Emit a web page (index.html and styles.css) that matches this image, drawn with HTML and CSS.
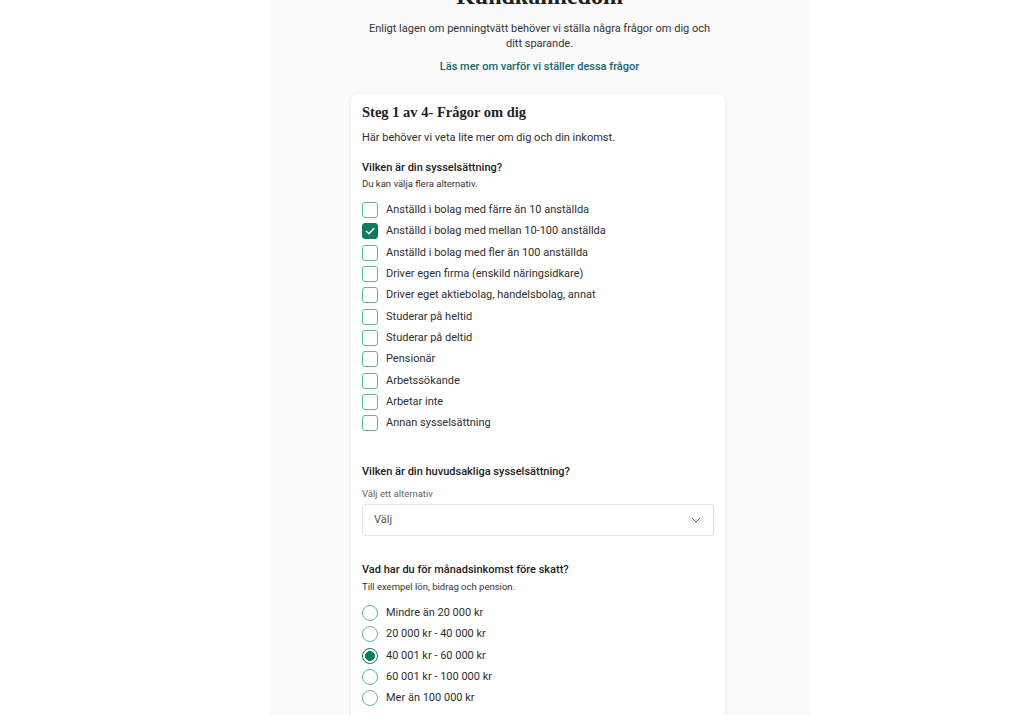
FILE: index.html
```html
<!DOCTYPE html>
<html lang="sv">
<head>
<meta charset="utf-8">
<title>Kundkännedom</title>
<link rel="stylesheet" href="styles.css">
</head>
<body>
<main class="page">
  <h1 class="title">Kundkännedom</h1>
  <p class="intro">Enligt lagen om penningtvätt behöver vi ställa några frågor om dig och ditt sparande.</p>
  <a class="more" href="#">Läs mer om varför vi ställer dessa frågor</a>

  <section class="card">
    <h2 class="step">Steg 1 av 4- Frågor om dig</h2>
    <p class="lead">Här behöver vi veta lite mer om dig och din inkomst.</p>

    <h3 class="q q-first">Vilken är din sysselsättning?</h3>
    <p class="hint">Du kan välja flera alternativ.</p>
    <div class="options">
      <label class="opt"><span class="box"></span>Anställd i bolag med färre än 10 anställda</label>
      <label class="opt"><span class="box checked"><svg viewBox="0 0 16 16" width="16" height="16"><path d="M4.3 8.2 L6.9 10.7 L11.8 5.6" fill="none" stroke="#fff" stroke-width="1.5" stroke-linecap="round" stroke-linejoin="round"/></svg></span>Anställd i bolag med mellan 10-100 anställda</label>
      <label class="opt"><span class="box"></span>Anställd i bolag med fler än 100 anställda</label>
      <label class="opt"><span class="box"></span>Driver egen firma (enskild näringsidkare)</label>
      <label class="opt"><span class="box"></span>Driver eget aktiebolag, handelsbolag, annat</label>
      <label class="opt"><span class="box"></span>Studerar på heltid</label>
      <label class="opt"><span class="box"></span>Studerar på deltid</label>
      <label class="opt"><span class="box"></span>Pensionär</label>
      <label class="opt"><span class="box"></span>Arbetssökande</label>
      <label class="opt"><span class="box"></span>Arbetar inte</label>
      <label class="opt"><span class="box"></span>Annan sysselsättning</label>
    </div>

    <h3 class="q q-main">Vilken är din huvudsakliga sysselsättning?</h3>
    <p class="field-label">Välj ett alternativ</p>
    <div class="select">
      <span>Välj</span>
      <svg class="chev" viewBox="0 0 10 6" width="10" height="6"><path d="M1 1 L5 5 L9 1" fill="none" stroke="#666" stroke-width="1"/></svg>
    </div>

    <h3 class="q q-income">Vad har du för månadsinkomst före skatt?</h3>
    <p class="hint">Till exempel lön, bidrag och pension.</p>
    <div class="options options-radio">
      <label class="opt"><span class="radio"></span>Mindre än 20 000 kr</label>
      <label class="opt"><span class="radio"></span>20 000 kr - 40 000 kr</label>
      <label class="opt"><span class="radio checked"></span>40 001 kr - 60 000 kr</label>
      <label class="opt"><span class="radio"></span>60 001 kr - 100 000 kr</label>
      <label class="opt"><span class="radio"></span>Mer än 100 000 kr</label>
    </div>
  </section>
</main>
</body>
</html>
```

FILE: styles.css
```css
html, body {
  margin: 0;
  padding: 0;
  background: #ffffff;
  overflow: hidden;
}

body {
  font-family: Roboto, "Liberation Sans", sans-serif;
  color: #2e2e2e;
}

.page {
  margin-left: 269px;
  width: 541px;
  min-height: 715px;
  background: #fafafa;
  display: flex;
  flex-direction: column;
  align-items: center;
}

.title {
  margin: -18px 0 0 0;
  font-family: "Liberation Serif", "DejaVu Serif", serif;
  font-weight: bold;
  font-size: 24px;
  line-height: 28px;
  color: #1e1e1e;
  text-align: center;
}

.intro {
  margin: 10.5px 0 0 0;
  width: 350px;
  font-size: 11px;
  line-height: 15px;
  text-align: center;
  color: #333;
}

.more {
  margin-top: 8px;
  font-size: 11px;
  line-height: 15px;
  font-weight: 500;
  color: #17666e;
  text-decoration: none;
}

.card {
  margin-top: 20.5px;
  align-self: flex-start;
  margin-left: 82px;
  width: 374px;
  box-sizing: border-box;
  padding: 9px 11px 30px 11px;
  background: #ffffff;
  border-radius: 7px;
  box-shadow: 0 1px 5px rgba(0, 0, 0, 0.07);
  display: flex;
  flex-direction: column;
}

.step {
  margin: 0;
  font-family: "Liberation Serif", "DejaVu Serif", serif;
  font-weight: bold;
  font-size: 14.5px;
  line-height: 18px;
  color: #1e1e1e;
}

.lead {
  margin: 8.5px 0 0 0;
  font-size: 11px;
  line-height: 15px;
  color: #2e2e2e;
}

.q {
  margin: 0;
  font-size: 11px;
  line-height: 15px;
  font-weight: 500;
  color: #222;
}

.q-first { margin-top: 15px; }
.q-main { margin-top: 32.5px; }
.q-income { margin-top: 26.5px; }

.hint {
  margin: 2.5px 0 0 0;
  font-size: 9.5px;
  line-height: 13px;
  color: #333;
}

.options {
  margin-top: 12px;
  display: flex;
  flex-direction: column;
  gap: 5.35px;
}

.options-radio {
  margin-top: 12px;
  gap: 5.3px;
}

.opt {
  display: flex;
  align-items: center;
  gap: 8px;
  height: 16px;
  font-size: 11px;
  line-height: 16px;
  color: #2e2e2e;
}

.box {
  width: 16px;
  height: 16px;
  box-sizing: border-box;
  border: 1.5px solid #5db79b;
  border-radius: 3px;
  flex: none;
  display: flex;
  align-items: center;
  justify-content: center;
}

.box.checked {
  background: #0b7b5c;
  border-color: #0b7b5c;
}

.box.checked svg {
  flex: none;
}

.radio {
  width: 16px;
  height: 16px;
  box-sizing: border-box;
  border: 1.5px solid #5db79b;
  border-radius: 50%;
  flex: none;
}

.radio.checked {
  border-color: #0b7b5c;
  background: radial-gradient(circle, #0b7b5c 0 4.6px, #ffffff 5.2px);
}

.field-label {
  margin: 8.5px 0 0 0;
  font-size: 9.5px;
  line-height: 13px;
  color: #666;
}

.select {
  margin-top: 3.5px;
  height: 32px;
  box-sizing: border-box;
  border: 1px solid #e2e2e2;
  border-radius: 4px;
  display: flex;
  align-items: center;
  justify-content: space-between;
  padding: 0 12px 0 11px;
  font-size: 11px;
  color: #555;
}

.chev {
  display: block;
}
```
